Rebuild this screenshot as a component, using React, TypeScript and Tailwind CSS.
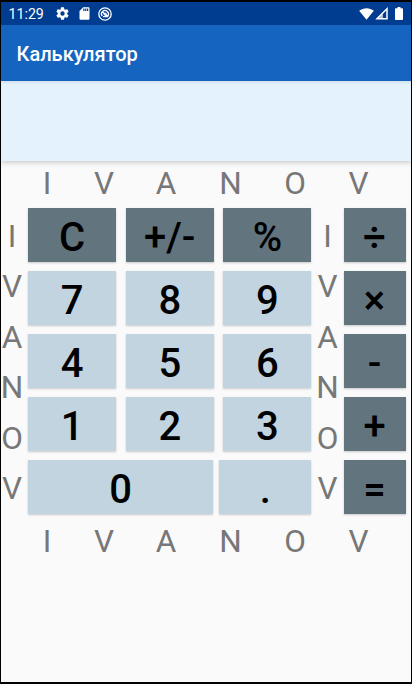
import React from "react";

const LETTERS = ["I", "V", "A", "N", "O", "V"];
const SLOTS = ["w-[56px]", "w-[58px]", "w-[66px]", "w-[63px]", "w-[66px]", "w-[61px]"];

function NameRow({ className }: { className: string }) {
  return (
    <div className={`flex h-[38px] pl-[18px] text-[31.5px] leading-[38px] font-normal text-[#777777] ${className}`}>
      {LETTERS.map((l, i) => (
        <span key={i} className={`${SLOTS[i]} text-center`}>{l}</span>
      ))}
    </div>
  );
}

function NameColumn({ className }: { className: string }) {
  return (
    <div className={`flex w-[22px] shrink-0 flex-col text-center text-[31.5px] font-normal text-[#777777] ${className}`}>
      {LETTERS.map((l, i) => (
        <span key={i} className="flex h-[51px] items-center justify-center leading-none">{l}</span>
      ))}
    </div>
  );
}

function Key({ label, dark = false, className = "" }: { label: string; dark?: boolean; className?: string }) {
  return (
    <button
      className={`flex h-[53.5px] items-center justify-center pt-[6px] text-[40px] leading-none font-medium text-black shadow-[0_1px_2px_rgba(0,0,0,0.2)] ${dark ? "bg-[#62747d]" : "bg-[#c1d4df]"} ${className}`}
    >
      {label}
    </button>
  );
}

function StatusBar() {
  return (
    <div className="flex h-[23px] items-center bg-[#003c8f] pl-[7.5px] pr-[8px] text-white">
      <span className="w-[46px] pt-[2px] text-[14.2px] leading-none">11:29</span>
      <svg className="size-[15px]" viewBox="0 0 24 24" fill="currentColor">
        <path d="M19.43 12.98c.04-.32.07-.64.07-.98s-.03-.66-.07-.98l2.11-1.65c.19-.15.24-.42.12-.64l-2-3.46c-.12-.22-.39-.3-.61-.22l-2.49 1c-.52-.4-1.08-.73-1.69-.98l-.38-2.65A.488.488 0 0 0 14 2h-4c-.25 0-.46.18-.49.42l-.38 2.65c-.61.25-1.17.59-1.69.98l-2.49-1c-.23-.09-.49 0-.61.22l-2 3.46c-.13.22-.07.49.12.64l2.11 1.65c-.04.32-.07.65-.07.98s.03.66.07.98l-2.11 1.65c-.19.15-.24.42-.12.64l2 3.46c.12.22.39.3.61.22l2.49-1c.52.4 1.08.73 1.69.98l.38 2.65c.03.24.24.42.49.42h4c.25 0 .46-.18.49-.42l.38-2.65c.61-.25 1.17-.59 1.69-.98l2.49 1c.23.09.49 0 .61-.22l2-3.46c.12-.22.07-.49-.12-.64l-2.11-1.65zM12 15.5a3.5 3.5 0 1 1 0-7 3.5 3.5 0 0 1 0 7z" />
      </svg>
      <svg className="ml-[7px] size-[15px]" viewBox="0 0 24 24" fill="currentColor">
        <path d="M18 2h-8L4 8v12c0 1.1.9 2 2 2h12c1.1 0 2-.9 2-2V4c0-1.1-.9-2-2-2zm-6 6h-2V4h2v4zm3 0h-2V4h2v4zm3 0h-2V4h2v4z" />
      </svg>
      <svg className="ml-[6.5px] size-[14px]" viewBox="0 0 14 14" fill="none" stroke="currentColor">
        <circle cx="7" cy="7" r="6.2" strokeWidth="1.3" />
        <path d="M4.2 9.2A3.5 3.5 0 1 1 9.8 9.1M4.3 4.8l5.9 5.3M5 9.7h4.5" strokeWidth="1.3" />
        <circle cx="7.2" cy="7.2" r="1.2" strokeWidth="1" />
      </svg>
      <svg className="ml-auto h-[12px] w-[15px]" viewBox="0 0 15 12" fill="currentColor">
        <path d="M.2 2.8C4.3-.6 10.7-.6 14.8 2.8L7.5 11.8z" />
      </svg>
      <svg className="ml-[1px] size-[13px]" viewBox="0 0 13 13">
        <path d="M12 1.8V11.8H2z" fill="none" stroke="currentColor" strokeWidth="1.5" />
        <path d="M8 5.8V12H1.5z" fill="currentColor" fillOpacity=".65" />
      </svg>
      <svg className="ml-[7px] h-[13px] w-[8px]" viewBox="0 0 8 13" fill="currentColor">
        <path d="M2.5 0h3v1.3H7.2a.8.8 0 0 1 .8.8v10.1a.8.8 0 0 1-.8.8H.8a.8.8 0 0 1-.8-.8V2.1a.8.8 0 0 1 .8-.8h1.7z" />
      </svg>
    </div>
  );
}

export default function App() {
  return (
    <div className="flex h-[684px] w-[412px] flex-col overflow-hidden border-x border-t-2 border-b-2 border-black bg-[#fafafa] font-['Roboto',sans-serif]">
      <StatusBar />
      <header className="flex h-[56px] items-center bg-[#1565c0] pt-[2px] pl-[15.5px] text-[20px] font-medium text-white">
        Калькулятор
      </header>
      <div className="h-[80px] shrink-0 bg-[#e3f2fd] shadow-[0_2px_5px_rgba(0,0,0,0.18),inset_0_2px_2px_rgba(0,0,0,0.06)]" />
      <NameRow className="mt-[4px]" />
      <main className="mt-[5px] flex h-[306px]">
        <NameColumn className="mt-[3px]" />
        <div className="ml-[5px] grid w-[283.5px] shrink-0 grid-cols-3 content-start gap-x-[9.5px] gap-y-[9.5px]">
          <Key label="C" dark />
          <Key label="+/-" dark />
          <Key label="%" dark />
          <Key label="7" />
          <Key label="8" />
          <Key label="9" />
          <Key label="4" />
          <Key label="5" />
          <Key label="6" />
          <Key label="1" />
          <Key label="2" />
          <Key label="3" />
          <div className="col-span-3 flex gap-[6px]">
            <Key label="0" className="w-[185px]" />
            <Key label="." className="flex-1" />
          </div>
        </div>
        <NameColumn className="mt-[3px] ml-[5px]" />
        <div className="ml-[5px] flex w-[62px] flex-col gap-[9.5px]">
          <Key label="÷" dark />
          <Key label="×" dark />
          <Key label="-" dark />
          <Key label="+" dark />
          <Key label="=" dark />
        </div>
      </main>
      <NameRow className="mt-[9px]" />
    </div>
  );
}
